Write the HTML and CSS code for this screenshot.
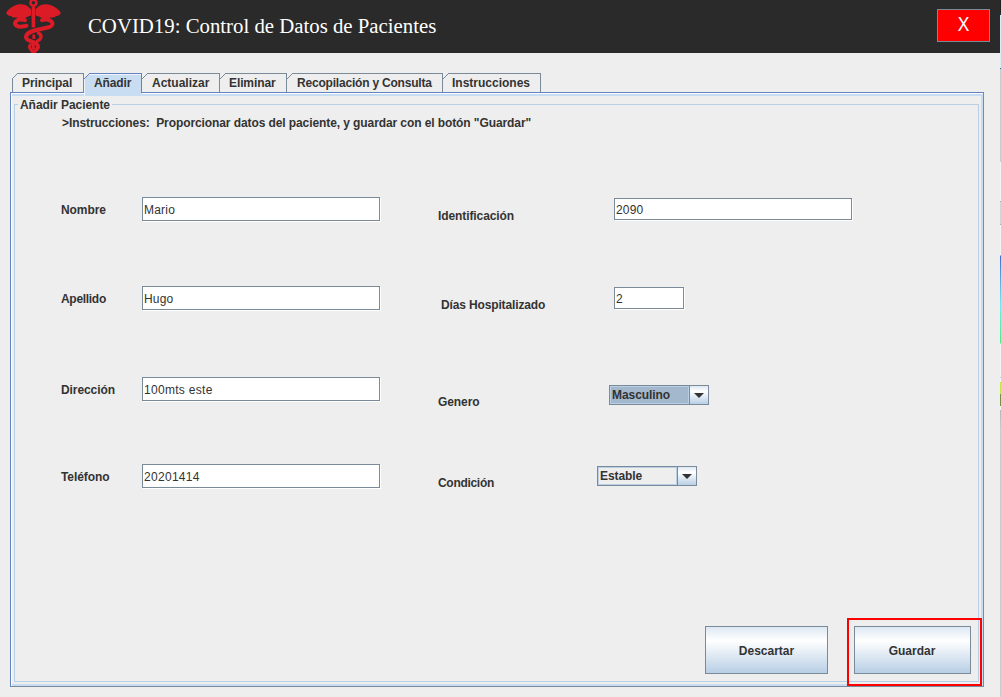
FILE: index.html
```html
<!DOCTYPE html>
<html lang="es">
<head>
<meta charset="utf-8">
<title>COVID19: Control de Datos de Pacientes</title>
<link rel="stylesheet" href="styles.css">
</head>
<body>
<div class="window">
  <header class="header">
    <svg class="logo" viewBox="0 0 60 53" width="60" height="53">
      <path fill="#db1b26" d="M25 9.500C20 2 8 2 0.200 12.500C1 15.300 3 16 5 15.900C6 17.400 8 17.700 10 17.600C13 19 20 18.500 22 16.500L25.300 15.500ZM29.500 9.500C34.500 2 46.500 2 54.800 12.500C54 15.300 52 16 50 15.900C49 17.400 47 17.700 45 17.600C42 19 35 18.500 33 16.500L29.500 15.500Z"/>
      <path fill="#db1b26" d="M25.600 7H29.200V27.500H25.600Z"/>
      <circle cx="27.400" cy="2.800" r="3" fill="none" stroke="#db1b26" stroke-width="2.600"/>
      <g fill="none" stroke="#db1b26" stroke-width="4" stroke-linecap="round">
        <path d="M19 20.200C10 17.500 5.500 24.500 12.500 26.500C15 27 17 26.300 20.500 25.800"/>
        <path d="M36 20.200C45 17.500 50 24.500 43.500 27C35 29.500 20.500 30 20 37C19.800 42.500 32 41 32 46.500C32 49 30 50 28 51.500"/>
        <path stroke-width="3.400" d="M32.500 33C37.500 36 34 40 31.500 41"/>
        <path stroke-width="3.200" d="M24.300 45C22.500 47 24.500 49.500 26.500 51.500"/>
        <path stroke-width="2.800" stroke-linecap="butt" d="M27.800 34.500V39M27.400 44V49"/>
      </g>
    </svg>
    <h1 class="title">COVID19: Control de Datos de Pacientes</h1>
    <button class="close">X</button>
  </header>
  <main class="content">
    <nav class="tabs">
      <span class="tab tab-principal">Principal</span>
      <span class="tab tab-anadir selected">Añadir</span>
      <span class="tab tab-actualizar">Actualizar</span>
      <span class="tab tab-eliminar">Eliminar</span>
      <span class="tab tab-consulta">Recopilación y Consulta</span>
      <span class="tab tab-instrucciones">Instrucciones</span>
    </nav>
    <section class="panel">
      <div class="group">
        <span class="legend">Añadir Paciente</span>
        <p class="hint">&gt;Instrucciones:&nbsp; Proporcionar datos del paciente, y guardar con el botón "Guardar"</p>
        <div class="form">
          <label class="label">Nombre</label><input class="field" value="Mario">
          <label class="label side">Identificación</label><input class="field low" value="2090">
          <label class="label tight">Apellido</label><input class="field" value="Hugo">
          <label class="label side days">Días Hospitalizado</label><input class="field low short" value="2">
          <label class="label">Dirección</label><input class="field wide-text" value="100mts este">
          <label class="label side gender">Genero</label>
          <div class="combo combo-gender focused"><span class="value">Masculino</span><span class="arrow"></span></div>
          <label class="label">Teléfono</label><input class="field wide-text" value="20201414">
          <label class="label side tight">Condición</label>
          <div class="combo combo-state"><span class="value">Estable</span><span class="arrow"></span></div>
        </div>
        <div class="actions">
          <button class="button discard">Descartar</button>
          <button class="button save">Guardar</button>
        </div>
      </div>
    </section>
  </main>
</div>
<div class="edge"></div>
</body>
</html>
```
FILE: styles.css
```css
*, *::before, *::after { box-sizing: border-box; }

body {
  margin: 0;
  display: flex;
  width: 1001px;
  height: 697px;
  overflow: hidden;
  background: #eee;
  color: #333;
  font: bold 12px/14px "Liberation Sans", Arial, sans-serif;
}

.window { width: 1000px; height: 697px; }

.edge {
  width: 1px;
  height: 697px;
  background: linear-gradient(#222 0 13px, #17405f 13px 14px, #222 14px 15px, #dcebf8 15px 68px, #2a62a0 68px 69px, #ccc 69px 162px, #f5f5f5 162px 201px, #aaa 201px 202px, #d5d5d5 202px 224px, #aaa 224px 225px, #f5f5f5 225px 255px, #3f6fd0 256px, #75e8f0 305px, #4bea86 343px, #f5f5f5 344px 377px, #ccc 377px 378px, #f5f5f5 378px 382px, #c3e64d 382px 394px, #77904a 394px 406px, #f5f5f5 406px 410px, #b5b5b5 410px, #ccc 430px);
}

.header {
  display: flex;
  height: 53px;
  padding: 0 10px 0 6px;
  background: #2a2a2a;
}

.title {
  margin: 14px 0 0 22px;
  color: #fff;
  font: 20.8px/24px "Liberation Serif", "Times New Roman", serif;
}

.close {
  width: 53px;
  height: 33px;
  margin: 9px 0 0 auto;
  padding: 0 0 3px;
  border: 1px solid #7a8a99;
  background: #f00;
  color: #fff;
  font: 19px/20px "Noto Sans", sans-serif;
}

.content { padding: 20px 16px 0 10px; }

.tabs { display: flex; height: 19px; padding-left: 2px; }

.tab {
  position: relative;
  height: 19px;
  padding: 2px 0 0 9px;
  border: 1px solid #7a8a99;
  border-width: 1px 1px 0 0;
  white-space: nowrap;
}
/* Cut corner */
.tab::before {
  content: "";
  position: absolute;
  left: 0;
  top: -1px;
  width: 6px;
  height: 6px;
  background: linear-gradient(135deg, #eee 3.7px, #7a8a99 3.9px 4.6px, transparent 4.8px);
}

.tab-principal { width: 72px; border-left-width: 1px; letter-spacing: -0.05px; }
.tab-principal::before { left: -1px; }
.tab-anadir { width: 58px; padding-left: 10px; letter-spacing: -0.1px; }
.tab-actualizar { width: 78px; padding-left: 10px; }
.tab-eliminar { width: 67px; letter-spacing: -0.1px; }
.tab-consulta { width: 156px; padding-left: 10px; letter-spacing: -0.2px; }
.tab-instrucciones { width: 98px; }

.selected {
  height: 23px;
  z-index: 1;
  border-color: #6382bf;
  background: #c8ddf2;
  box-shadow: inset 1px 1px #eef4fb;
}
.selected::before { background: linear-gradient(135deg, #eee 3.7px, #6382bf 3.9px 4.6px, transparent 4.8px); }
.selected::after {
  content: "";
  position: absolute;
  right: -1px;
  bottom: 0;
  width: 1px;
  height: 3px;
  background: #c8ddf2;
}

.panel {
  width: 974px;
  height: 595px;
  padding: 11px 4px 4px 3px;
  border: 1px solid #6382bf;
  border-right-color: #7a8a99;
  border-bottom-color: #7a8a99;
  box-shadow: inset 1px 1px #fff, inset -2px -2px #c8ddf2, inset 0 3px #c8ddf2;
}

.group {
  width: 965px;
  height: 578px;
  border: 1px solid #b8cfe5;
}

.legend {
  display: block;
  width: 94px;
  height: 14px;
  margin: -7px 0 0 3px;
  padding-left: 2px;
  background: #eee;
  white-space: nowrap;
  letter-spacing: -0.05px;
}

.hint { margin: 4px 0 0 47px; white-space: nowrap; letter-spacing: -0.09px; }

.form {
  display: grid;
  grid-template-columns: 81px 296px 176px 1fr;
  grid-template-rows: 89px 91px 87px 24px;
  align-items: start;
  margin: 67px 0 0 46px;
}

.label { padding-top: 6px; white-space: nowrap; letter-spacing: -0.09px; }
.tight { letter-spacing: -0.3px; }
.side { padding-top: 12px; }
.days { padding-left: 3px; letter-spacing: -0.14px; }
.gender { padding-top: 18px; }

.field {
  width: 238px;
  height: 24px;
  padding: 1px 1px 0;
  border: 1px solid #7a8a99;
  background: #fff;
  box-shadow: 1px 1px #fff;
  color: #333;
  font: 12px/20px "Liberation Sans", Arial, sans-serif;
  letter-spacing: 0.2px;
}
.wide-text { letter-spacing: 0.3px; }
.low { height: 22px; margin-top: 1px; }
.short { width: 70px; }

.combo {
  display: flex;
  width: 100px;
  height: 20px;
  border: 1px solid #7a8a99;
}
.combo-gender { margin: 8px 0 0 -5px; }
.combo-state { margin: 2px 0 0 -17px; }

.value {
  width: 79px;
  padding: 1px;
  border: 1px solid #b8cfe5;
  letter-spacing: -0.07px;
}
.focused .value { background: #a3b8cc; }

.arrow {
  flex: 1;
  padding: 7px 0 0 4px;
  border-left: 1px solid #7a8a99;
  background: linear-gradient(#dde8f3, #fff 30%, #b8cfe5);
}
.arrow::before {
  content: "";
  display: block;
  width: 10px;
  height: 5px;
  background: #333;
  clip-path: polygon(0 0, 100% 0, 50% 100%);
}

.actions { display: flex; gap: 26px; margin: 138px 0 0 690px; }

.button {
  position: relative;
  height: 48px;
  padding: 2px 0 0;
  border: 1px solid #7a8a99;
  background: linear-gradient(#dde8f3, #fff 30%, #b8cfe5);
  color: #333;
  font: bold 12px/14px "Liberation Sans", Arial, sans-serif;
}
.discard { width: 123px; }
.save { width: 117px; padding-right: 1px; }
.save::after {
  content: "";
  position: absolute;
  left: -8px;
  top: -9px;
  width: 135px;
  height: 68px;
  border: 2px solid #f00;
}
```
